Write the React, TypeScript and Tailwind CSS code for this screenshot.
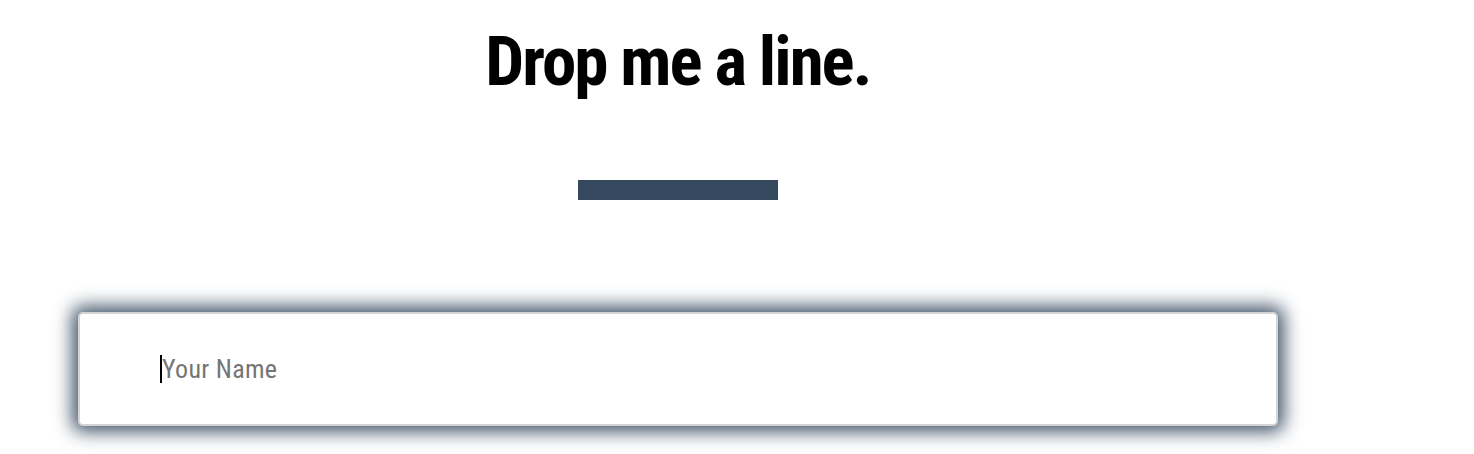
export default function App() {
  return (
    <div className="min-h-[454px] w-full bg-white overflow-hidden">
      <div className="ml-[78px] w-[1200px] pt-[27px] flex flex-col items-center">
        {/* Heading */}
        <h1
          className="text-[69px] leading-none font-bold text-black font-stretch-condensed tracking-[-2px]"
          style={{ fontFamily: "'Roboto Condensed', Roboto, 'Liberation Sans Narrow', sans-serif" }}
        >
          Drop me a line.
        </h1>

        {/* Divider bar */}
        <div className="mt-[84px] h-[20px] w-[200px] bg-[#34495e]" />

        {/* Name field */}
        <div className="mt-[112px] w-full h-[114px] rounded-[5px] border-2 border-[#d4d4d4] bg-white shadow-[0_0_18px_6px_rgba(52,73,94,0.92)] flex items-center pl-[80px]">
          <span className="w-[2px] h-[28px] bg-black" />
          <input
            type="text"
            placeholder="Your Name"
            className="flex-1 bg-transparent outline-none text-[26px] tracking-[0.3px] text-black font-stretch-semi-condensed placeholder:text-[#757575] pr-6"
            style={{ fontFamily: "Roboto, 'Liberation Sans', sans-serif" }}
          />
        </div>
      </div>
    </div>
  );
}
